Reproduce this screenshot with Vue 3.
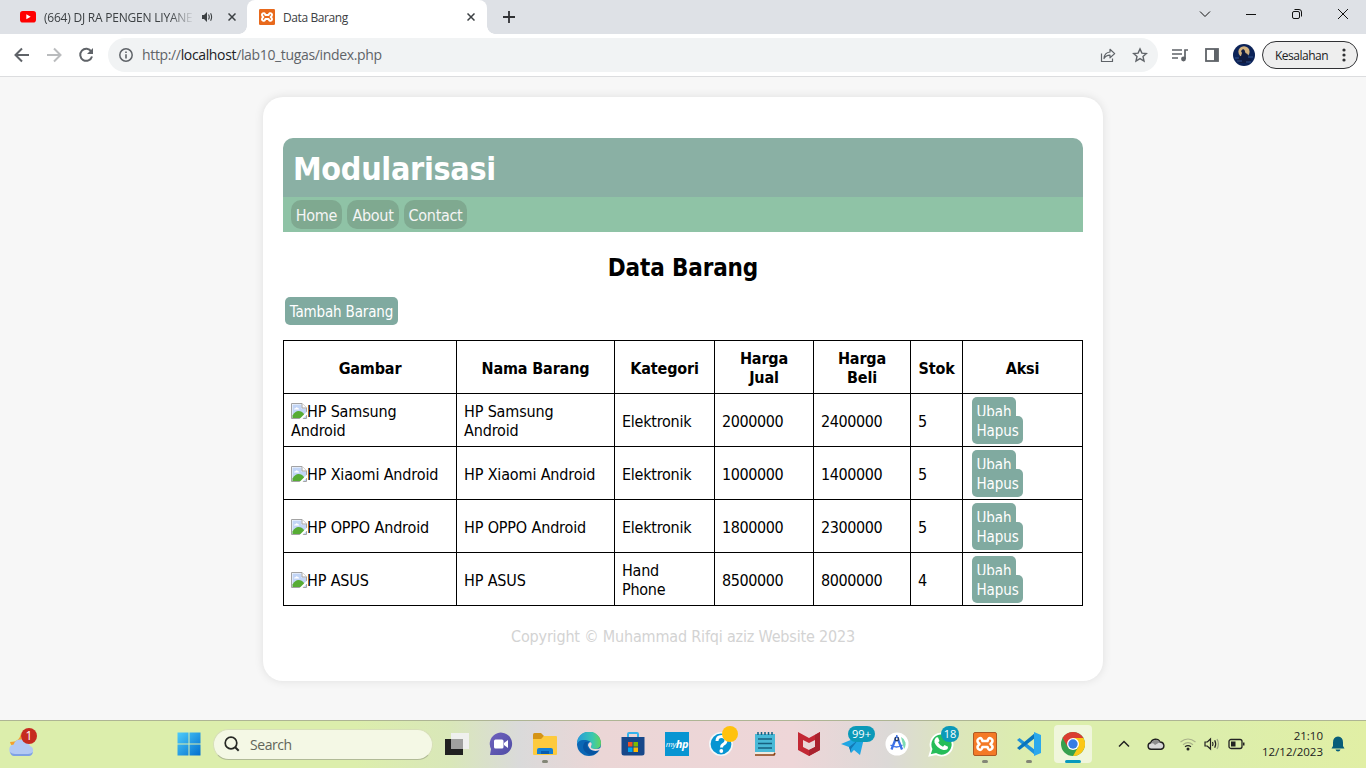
<script setup>
const rows = [
  { name: 'HP Samsung Android', kategori: 'Elektronik', jual: '2000000', beli: '2400000', stok: '5' },
  { name: 'HP Xiaomi Android', kategori: 'Elektronik', jual: '1000000', beli: '1400000', stok: '5' },
  { name: 'HP OPPO Android', kategori: 'Elektronik', jual: '1800000', beli: '2300000', stok: '5' },
  { name: 'HP ASUS', kategori: 'Hand Phone', jual: '8500000', beli: '8000000', stok: '4' }
]
const heads = ['Gambar', 'Nama Barang', 'Kategori', 'Harga Jual', 'Harga Beli', 'Stok', 'Aksi']
const xampp = 'M9.500 9H14.500L15 7.500Q16 5.500 18 6.500Q20.500 8 19 10.500L17.500 12L19 13.500Q20.500 16 18 17.500Q16 18.500 15 16.500L14.500 15H9.500L9 16.500Q8 18.500 6 17.500Q3.500 16 5 13.500L6.500 12L5 10.500Q3.500 8 6 6.500Q8 5.500 9 7.500Z'
</script>

<template>
  <div class="screen">
    <header class="tabs">
      <div class="tab first">
        <svg class="yt" width="16" height="12" viewBox="0 0 16 12"><rect width="16" height="11.5" rx="2.8" fill="#f00" /><path d="M6.3 3.3v5l4.4-2.5z" fill="#fff" /></svg>
        <span class="tab-title faded">(664) DJ RA PENGEN LIYANE</span>
        <svg class="sound" width="12" height="12" viewBox="0 0 12 12"><path d="M1 4h2l3-3v10L3 8H1z" fill="#3c4043" /><path d="M7.5 3.5q1.5 2.5 0 5M9.6 2.2q2 3.8 0 7.6" stroke="#3c4043" stroke-width="1.1" fill="none" /></svg>
        <svg class="close" width="8" height="8" viewBox="0 0 8 8"><path d="M.5.5l7 7M7.5.5l-7 7" stroke="#3c4043" stroke-width="1.5" /></svg>
      </div>
      <div class="tab active">
        <svg width="16" height="16" viewBox="0 0 24 24"><rect width="24" height="24" rx="2" fill="#e8691c" /><path :d="xampp" fill="none" stroke="#fff" stroke-width="2.800" stroke-linejoin="round" /></svg>
        <span class="tab-title second">Data Barang</span>
        <svg class="close" width="8" height="8" viewBox="0 0 8 8"><path d="M.5.5l7 7M7.5.5l-7 7" stroke="#3c4043" stroke-width="1.5" /></svg>
      </div>
      <svg class="plus" width="12" height="12" viewBox="0 0 12 12"><path d="M6 0v12M0 6h12" stroke="#303134" stroke-width="1.8" /></svg>
      <div class="win">
        <svg width="12" height="12" viewBox="0 0 12 12"><path d="M1 3.500l5 5 5-5" /></svg>
        <svg width="12" height="12" viewBox="0 0 12 12"><path d="M1 6.500h10" /></svg>
        <svg width="12" height="12" viewBox="0 0 12 12"><rect x="1.500" y="3.500" width="7" height="7" rx="1.500" /><path d="M3.500 1.500H8q2.500 0 2.500 2.500v4.500" /></svg>
        <svg width="12" height="12" viewBox="0 0 12 12"><path d="M1 1l10 10M11 1L1 11" /></svg>
      </div>
    </header>

    <div class="toolbar">
      <svg width="16" height="16" viewBox="0 0 16 16"><path d="M15 8H2M8 1.500L1.500 8 8 14.500" fill="none" stroke="#5f6368" stroke-width="2" /></svg>
      <svg width="16" height="16" viewBox="0 0 16 16"><path d="M1 8h13M8 1.500L14.500 8 8 14.500" fill="none" stroke="#babcbe" stroke-width="2" /></svg>
      <svg width="16" height="16" viewBox="0 0 16 16"><path d="M13.300 4.600A6 6 0 1 0 14 9.500" fill="none" stroke="#5f6368" stroke-width="2" /><path d="M15 1v6H9z" fill="#5f6368" /></svg>
      <div class="omnibox">
        <svg width="14" height="14" viewBox="0 0 14 14"><circle cx="7" cy="7" r="6.200" fill="none" stroke="#5f6368" stroke-width="1.500" /><path d="M7 6.200V10.500M7 3.500v1.600" stroke="#5f6368" stroke-width="1.600" /></svg>
        <span class="url">http://<b>localhost</b>/lab10_tugas/index.php</span>
        <svg class="share" width="16" height="16" viewBox="0 0 16 16"><path d="M1.500 6.500v8h11v-3M4 11.500C4.300 7.500 6.500 5.300 10 5V2.300L14.700 6.600 10 10.800V8.200C7.300 8.200 5.300 9.300 4 11.500z" fill="none" stroke="#5f6368" stroke-width="1.200" stroke-linejoin="round" /></svg>
        <svg width="16" height="16" viewBox="0 0 16 16"><path d="M8 1.900l1.900 4.200 4.500.4-3.400 3 1 4.500L8 11.600 4 14l1-4.500-3.400-3 4.500-.4z" fill="none" stroke="#5f6368" stroke-width="1.400" /></svg>
      </div>
      <svg class="queue" width="16" height="14" viewBox="0 0 16 14"><path d="M0 2h10M0 6h10M0 10h6" stroke="#5f6368" stroke-width="1.700" /><path d="M13 11V2h3" fill="none" stroke="#5f6368" stroke-width="1.700" /><circle cx="11.500" cy="11" r="2.400" fill="#5f6368" /></svg>
      <svg class="panel" width="14" height="14" viewBox="0 0 14 14"><rect x="1" y="1" width="12" height="12" fill="#fff" stroke="#5f6368" stroke-width="1.800" /><path d="M9 1h4v12H9z" fill="#5f6368" /></svg>
      <svg class="avatar" width="22" height="22" viewBox="0 0 22 22"><circle cx="11" cy="11" r="11" fill="#0c2358" /><circle cx="11" cy="7.800" r="5.600" fill="#d3b27f" /><path d="M5 14l3-2 1-3-1-2 2-2 1.500 1 1 3 2 1 1 3 3 3-4 3H7l-3-2z" fill="#101b40" /><path d="M2 14h4M15 13h5M4 17h5M13 18h5" stroke="#31538d" /></svg>
      <div class="error-chip"><span>Kesalahan</span><svg width="4" height="14" viewBox="0 0 4 14" fill="#303134"><circle cx="2" cy="2" r="1.600" /><circle cx="2" cy="7" r="1.600" /><circle cx="2" cy="12" r="1.600" /></svg></div>
    </div>

    <main class="page">
      <section class="card">
        <h1>Modularisasi</h1>
        <nav><a class="n1">Home</a><a class="n2">About</a><a class="n3">Contact</a></nav>
        <h2><span>Data Barang</span></h2>
        <a class="add">Tambah Barang</a>
        <table>
          <colgroup><col class="c1"><col class="c2"><col class="c3"><col class="c4"><col class="c5"><col class="c6"><col class="c7"></colgroup>
          <thead><tr><th v-for="h in heads" :key="h">{{ h }}</th></tr></thead>
          <tbody>
            <tr v-for="r in rows" :key="r.name">
              <td><svg class="broken" width="16" height="16" viewBox="0 0 16 16"><path d="M.5.5h10.500l4.500 4.500v10.500H.5z" fill="#fff" stroke="#a3a3a3" /><path d="M1.500 1.500h9v4H15V15H1.500z" fill="#c2d5f6" /><path d="M3 6.500q.2-1.500 1.500-1.300Q5.500 3.500 7 5.200q1.300 0 1.300 1.300z" fill="#fff" /><path d="M1.500 15v-2.500q2.500-4.500 6-4.500 3.500 0 5.500 3v4z" fill="#57ac34" /><path d="M11 .5V5h4.500" fill="#fff" stroke="#a3a3a3" /><path d="M16 8.500L8.500 16h3L16 11.500z" fill="#fff" /></svg>{{ r.name }}</td>
              <td>{{ r.name }}</td><td>{{ r.kategori }}</td><td>{{ r.jual }}</td><td>{{ r.beli }}</td><td>{{ r.stok }}</td>
              <td class="actions"><a>Ubah</a><a>Hapus</a></td>
            </tr>
          </tbody>
        </table>
        <footer><span>Copyright © Muhammad Rifqi aziz Website 2023</span></footer>
      </section>
    </main>

    <div class="taskbar">
      <div class="weather">
        <svg width="28" height="30" viewBox="0 0 28 30"><path d="M13 4c-1 6-4 9-11 9 1 5 7 8 12 5z" fill="#f5a12c" /><path d="M6 26a5.300 5.300 0 0 1-.3-10.500A7 7 0 0 1 18.500 14Q21 14 22 17a4.700 4.700 0 0 1-.5 9z" fill="#b2c9f4" /><path d="M2 23q2 2 5 2h13q3 0 5-2-1 4-4 4H6q-3 0-4-4z" fill="#7ea1e5" /></svg>
        <i class="badge red">1</i>
      </div>
      <div class="start"><svg width="24" height="24" viewBox="0 0 24 24"><defs><linearGradient id="wg" x1="0" y1="0" x2="24" y2="24" gradientUnits="userSpaceOnUse"><stop stop-color="#50cefb" /><stop offset="1" stop-color="#006dcd" /></linearGradient></defs><path d="M.5.5h11v11H.5zM12.500.5h11v11h-11zM.5 12.500h11v11H.5zM12.500 12.500h11v11h-11z" fill="url(#wg)" /></svg></div>
      <div class="search"><svg width="16" height="16" viewBox="0 0 16 16"><circle cx="7" cy="7" r="5.800" fill="none" stroke="#262824" stroke-width="1.700" /><path d="M11.200 11.200l3.500 3.500" stroke="#262824" stroke-width="2" /></svg><span>Search</span></div>
      <div class="apps">
        <div class="app"><svg width="24" height="24" viewBox="0 0 24 24"><path d="M0 7h18v16H0z" fill="#202020" /><path d="M6 1h18v16H6z" fill="#f0f0f0" opacity=".95" /><path d="M6 7h12v10H6z" fill="#a0a09f" /></svg></div>
        <div class="app"><svg width="24" height="24" viewBox="0 0 24 24"><defs><linearGradient id="tg" x2="1" y2="1"><stop stop-color="#6f62bd" /><stop offset="1" stop-color="#4f4ca5" /></linearGradient></defs><path d="M1 23l1-6A11.200 11.200 0 1 1 12 23z" fill="url(#tg)" /><rect x="5" y="7.500" width="9.500" height="9" rx="1.500" fill="#fff" /><path d="M15 11l4-3v8l-4-3z" fill="#fff" /></svg></div>
        <div class="app"><svg width="26" height="24" viewBox="0 0 26 24"><path d="M1 2.500Q1 1 2.500 1H9l3 3-2 4H1z" fill="#d59416" /><path d="M1 7h8l3-3h12q1 0 1 1v17q0 1-1 1H2q-1 0-1-1z" fill="#fdca3d" /><path d="M5 22v-4q0-2 2-2h12q2 0 2 2v4z" fill="#1380d5" /><path d="M9 19h8v3H9z" fill="#075caf" /></svg><i class="line" /></div>
        <div class="app"><svg width="24" height="24" viewBox="0 0 24 24"><defs><linearGradient id="eg"><stop stop-color="#279bdc" /><stop offset=".65" stop-color="#3ac7b0" /><stop offset="1" stop-color="#62d55e" /></linearGradient></defs><circle cx="12" cy="12" r="12" fill="#0b67b5" /><path d="M0 12A12 12 0 0 1 24 11Q24 17 17 17c-3 0-4-1-3-2.500C17 10 11 7.500 6 8Q2 8 0 12z" fill="url(#eg)" /><path d="M8 10q-5 7 3 12 6 3 11-4-7 3-11-2-2-3 0-6z" fill="#0754a1" /><path d="M14 14.500q2-3.500-1-4.500-3 2-1.500 4.500 1.500 4 7 4.500 3 0 6-2v-1.500q-3 2-7.500 1.500-4-.5-3-2.500z" fill="#ecdada" /></svg></div>
        <div class="app"><svg width="24" height="24" viewBox="0 0 24 24"><path d="M7 7V2q0-1 1-1h8q1 0 1 1v5" fill="none" stroke="#35b3ed" stroke-width="2" /><path d="M.5 5h23v16q0 2.500-2.500 2.500H3q-2.500 0-2.500-2.500z" fill="#17488a" /><path d="M7 10h4.500v4.500H7z" fill="#f25022" /><path d="M12.500 10H17v4.500h-4.500z" fill="#7fba00" /><path d="M7 15.500h4.500V20H7z" fill="#00a4ef" /><path d="M12.500 15.500H17V20h-4.500z" fill="#ffb900" /></svg></div>
        <div class="app"><div class="hp"><span>my</span><b>hp</b></div></div>
        <div class="app"><svg width="24" height="24" viewBox="0 0 24 24"><circle cx="12" cy="12" r="11.200" fill="#0795d2" stroke="#f4f7f8" stroke-width="1.600" /><path d="M8 9q0-4.500 4.500-4.500T17 8.500q0 2.500-3 4-1.500 1-1.500 3" fill="none" stroke="#fff" stroke-width="3" /><circle cx="12.300" cy="19" r="1.900" fill="#fff" /></svg><i class="dot" /></div>
        <div class="app"><svg width="24" height="26" viewBox="0 0 24 26"><path d="M2 3h20v19H2z" fill="#49b9d7" /><path d="M2 21h20l-2 3H2z" fill="#efe9df" /><path d="M2 24h19l1-2" stroke="#8c4215" stroke-width="1.700" fill="none" /><path d="M5 1v3M8.500 1v3M12 1v3M15.500 1v3M19 1v3M5 8h14M5 12.500h14M5 17h14" stroke="#176080" stroke-width="1.500" /></svg></div>
        <div class="app"><svg width="24" height="24" viewBox="0 0 24 24"><path d="M1 0l11 6 11-6v18l-11 6-11-6zM6 8v7l6 3 6-3V8l-6 3z" fill="#c32835" fill-rule="evenodd" /><path d="M18 3l5-3v18l-11 6v-6l6-3z" fill="#a9222e" /></svg></div>
        <div class="app"><svg width="28" height="26" viewBox="0 0 28 26"><path d="M2 13L26 3l-5 21-6-5-3 3-2-6z" fill="#20a6e3" /><path d="M10 16l9-7-7 9v4z" fill="#1278b4" /></svg><i class="badge cyan wide">99+</i></div>
        <div class="app"><svg width="24" height="24" viewBox="0 0 24 24"><circle cx="12" cy="12" r="11.500" fill="#fff" /><path d="M16 5a8 8 0 0 1 3 12z" fill="#7bdbb1" /><path d="M11 6L6.500 17.500M12.500 6L17 17.500" stroke="#3c72e8" stroke-width="2.300" /><circle cx="11.800" cy="7" r="1.700" fill="#fff" stroke="#263b63" stroke-width="1.500" /><path d="M5.500 13q6 4 12 0M11.800 3v3" stroke="#3c72e8" stroke-width="1.500" fill="none" /></svg></div>
        <div class="app"><svg width="26" height="26" viewBox="0 0 26 26"><path d="M1.500 24.500l2-6.500A11 11 0 1 1 8 23z" fill="#25bd59" stroke="#fff" stroke-width="1.800" /><path d="M8 6.500l2-.2 1.500 3.700-1.300 1.500q1.700 3 4.800 4.300l1.500-1.700 3.500 1.700q.2 3.700-4.500 3.200-6.500-1.500-9-7.500-.5-3 1.500-5z" fill="#fff" /></svg><i class="badge cyan wa">18</i></div>
        <div class="app"><svg width="24" height="24" viewBox="0 0 24 24"><rect x=".5" y=".5" width="23" height="23" rx="1.500" fill="#f47a27" stroke="#ad5925" /><path :d="xampp" fill="none" stroke="#fff" stroke-width="2.500" stroke-linejoin="round" /></svg><i class="line" /></div>
        <div class="app"><svg width="24" height="24" viewBox="0 0 24 24"><path d="M0 8l2.500-2L18 18v5z" fill="#2093dc" /><path d="M0 16l2.500 2L18 6V1z" fill="#0875bd" /><path d="M17 0l7 3v18l-7 3z" fill="#2ba9ed" /></svg><i class="line" /></div>
        <div class="app current"><svg width="24" height="24" viewBox="0 0 24 24"><circle cx="12" cy="12" r="12" fill="#37a04e" /><path d="M1.600 6A12 12 0 0 1 22.400 6H12L6.800 15z" fill="#da3d31" /><path d="M22.400 6A12 12 0 0 1 12 24L17.200 15 12 6z" fill="#fbc716" /><circle cx="12" cy="12" r="6" fill="#fff" /><circle cx="12" cy="12" r="4.700" fill="#377de4" /></svg><i class="line on" /></div>
      </div>
      <div class="tray">
        <svg class="up" width="12" height="8" viewBox="0 0 12 8"><path d="M1 6.500l5-5 5 5" fill="none" stroke="#222" stroke-width="1.500" /></svg>
        <svg class="cloud" width="18" height="14" viewBox="0 0 18 14"><path d="M4 12.300a3.300 3.300 0 0 1-.3-6.500A5 5 0 0 1 13 5a3.700 3.700 0 0 1 1 7.300z" fill="#d8d8d8" stroke="#1e1e1e" stroke-width="1.400" /><path d="M4 6q3 0 4 2l5-3q-4-5-9 1" fill="#8c8c8c" /></svg>
        <svg class="wifi" width="18" height="14" viewBox="0 0 18 14" fill="none"><path d="M1.500 5q7.500-6 15 0M4 7.700q5-4 10 0" stroke="#a9b28a" stroke-width="1.200" /><path d="M6 9.800q3-2.200 6 0" stroke="#222" stroke-width="1.200" /><circle cx="9" cy="12" r="1.500" fill="#222" /></svg>
        <svg class="volume" width="16" height="14" viewBox="0 0 16 14" fill="none" stroke="#222" stroke-width="1.200"><path d="M1 5h2.300L6.500 2v10L3.300 9H1zM8.500 5q1 2 0 4M10.700 3.300q2 3.700 0 7.400" /><path d="M13 2q2.800 5 0 10" stroke="#9ba582" /></svg>
        <svg class="battery" width="17" height="12" viewBox="0 0 17 12"><rect x="1" y="1.500" width="13" height="9" rx="2" fill="none" stroke="#222" stroke-width="1.300" /><path d="M3 3.500h4.500v5H3zM15 4.500h1.500v3H15z" fill="#222" /></svg>
        <div class="clock"><span class="time">21:10</span><span class="date">12/12/2023</span></div>
        <svg class="bell" width="14" height="16" viewBox="0 0 14 16"><path d="M7 .5q5 .5 5 6v3.500l1.500 2.500H.5L2 10V6.500Q2 1 7 .5zM4.500 13.500h5Q9 15.500 7 15.500t-2.500-2" fill="#075d79" /></svg>
      </div>
    </div>
  </div>
</template>

<style>
body { margin: 0; overflow: hidden; }
</style>

<style scoped>
* { box-sizing: border-box; }
.screen { width: 1366px; height: 768px; display: flex; flex-direction: column; background: #f7f7f7; font-family: "Open Sans", "Noto Sans", sans-serif; overflow: hidden; }
svg { display: block; flex: none; }
.tabs { height: 34px; background: #dee1e6; display: flex; align-items: center; flex: none; }
.tab { display: flex; align-items: center; height: 34px; white-space: nowrap; }
.first { width: 247px; padding-left: 20px; }
.active { position: relative; width: 240px; background: #fff; border-radius: 8px 8px 0 0; padding: 0 12px; }
.active::before, .active::after { content: ""; position: absolute; bottom: 0; width: 8px; height: 8px; }
.active::before { left: -8px; background: radial-gradient(circle at 0 0, transparent 7.5px, #fff 8px); }
.active::after { right: -8px; background: radial-gradient(circle at 100% 0, transparent 7.5px, #fff 8px); }
.tab-title { font-size: 12px; color: #3c4043; line-height: 17px; }
.faded { width: 150px; margin-left: 8px; overflow: hidden; letter-spacing: -.22px; -webkit-mask-image: linear-gradient(90deg, #000 84%, transparent); mask-image: linear-gradient(90deg, #000 84%, transparent); }
.sound { margin-left: 7px; }
.first .close { margin-left: 15px; }
.second { margin-left: 8px; letter-spacing: -.4px; }
.active .close { margin-left: auto; }
.plus { margin-left: 16px; }
.win { margin-left: auto; display: flex; gap: 34px; padding: 0 17px 6px 0; }
.win svg { fill: none; stroke: #111; stroke-width: 1; }
.toolbar { height: 43px; background: #fff; border-bottom: 1px solid #dcdddf; display: flex; align-items: center; padding-left: 14px; gap: 16px; flex: none; }
.omnibox { width: 1050px; height: 34px; border-radius: 17px; background: #f1f3f4; display: flex; align-items: center; padding: 0 10px 0 11px; margin-left: -2px; }
.url { margin-left: 9px; font-size: 14px; line-height: 20px; color: #5f6368; letter-spacing: -.35px; }
.url b { font-weight: 400; color: #202124; }
.share { margin-left: auto; margin-right: 16px; }
.queue { margin-left: -2px; }
.panel { margin-left: 1px; }
.avatar { margin-left: -2px; }
.error-chip { width: 96px; height: 28px; margin-left: -9px; border: 1px solid #303134; border-radius: 14px; background: #eee; display: flex; align-items: center; justify-content: space-between; padding: 0 11px 0 12px; font-size: 12px; color: #202124; letter-spacing: -.5px; }

.page { height: 643px; flex: none; padding-top: 20px; display: flex; justify-content: center; align-items: flex-start; font-family: "DejaVu Sans Condensed", "DejaVu Sans", sans-serif; font-stretch: condensed; font-size: 16px; line-height: 19px; color: #000; }
.card { width: 840px; height: 584px; padding: 41px 20px 0; border-radius: 20px; background: #fff; box-shadow: 0 0 10px rgba(0, 0, 0, .1); }
h1 { margin: 0; height: 59px; padding: 11px 10px 0; border-radius: 10px 10px 0 0; background: #8ab0a4; color: #fff; font-size: 32px; line-height: 40px; letter-spacing: -.3px; }
nav { height: 35px; background: #8fc3a6; display: flex; align-items: center; gap: 5px; padding-left: 8px; }
nav a { height: 29px; line-height: 31px; border-radius: 10px; background: #7fa990; color: #f5f5f5; text-align: center; letter-spacing: -.3px; }
.n1 { width: 51px; } .n2 { width: 52px; } .n3 { width: 63px; }
h2 { margin: 20px 0 15px; height: 30px; text-align: center; font-size: 24px; line-height: 32px; letter-spacing: -.15px; }
.add { display: block; width: 113px; height: 28px; margin-left: 2px; border-radius: 5px; background: #80aaa0; color: #fff; font-size: 15px; line-height: 30px; text-align: center; letter-spacing: -.15px; }
table { width: 800px; margin-top: 15px; table-layout: fixed; border-collapse: collapse; }
.c1 { width: 173px; } .c2 { width: 158px; } .c3 { width: 100px; } .c4 { width: 99px; } .c5 { width: 97px; } .c6 { width: 52px; } .c7 { width: 120px; }
th, td { height: 53px; padding: 2px 7px 0; border: 1px solid #000; text-align: left; vertical-align: middle; letter-spacing: -.15px; }
th { text-align: center; padding: 2px 3px 0; letter-spacing: -.15px; }
th:nth-child(4), th:nth-child(5) { padding: 2px 20px 0; }
td:nth-child(2) { padding-right: 15px; }
td:nth-child(3) { padding-right: 12px; letter-spacing: -.25px; }
td:nth-child(n + 4) { letter-spacing: -.42px; }
td:first-child { padding-right: 16px; }
.broken { display: inline-block; vertical-align: -2px; }
tbody tr td.actions { padding: 2px 0 0 9px; vertical-align: top; letter-spacing: -.1px; }
.actions a { display: block; width: 44px; height: 28px; margin-top: 1px; border-radius: 5px; background: #80aaa0; color: #fff; font-size: 15px; line-height: 31px; padding-left: 4.5px; }
.actions a + a { position: relative; width: 51px; margin-top: -9px; }
footer { margin-top: 21px; text-align: center; color: #d3d3d3; letter-spacing: -.18px; }

.taskbar { height: 48px; flex: none; border-top: 1px solid #aeb594; display: flex; align-items: center; padding-bottom: 1px; background: linear-gradient(90deg, #dceeac 0, #dceeac 26%, #d9e7b9 33%, #dadada 38%, #ebd6d6 44%, #eed6d8 58%, #dcd9d7 65%, #dce6bb 70%, #dceeac 76%, #dceeac 88%, #e1efa5 100%); }
.weather { position: relative; width: 177px; padding-left: 8px; }
.badge { position: absolute; height: 16px; border-radius: 8px; color: #fff; font: normal 11px/16px "Open Sans", sans-serif; text-align: center; }
.red { left: 21px; top: -1px; width: 16px; background: #c62b20; font-size: 12px; }
.start { width: 36px; }
.search { width: 220px; height: 31px; border-radius: 16px; background: #f4f8e5; border: 1px solid #d7dfb8; border-bottom-color: #b1bb96; display: flex; align-items: center; padding-left: 10px; font-size: 14px; color: #62665a; }
.search span { margin-left: 10px; letter-spacing: -.45px; }
.apps { display: flex; margin-left: 5px; gap: 6px; margin-right: 22px; }
.app { position: relative; width: 38px; height: 38px; display: flex; align-items: center; justify-content: center; border-radius: 4px; }
.current { background: #f0f6dc; }
.line { position: absolute; bottom: 0; left: 16px; width: 6px; height: 3px; border-radius: 2px; background: #838677; }
.line.on { width: 16px; left: 11px; background: #0899bc; }
.hp { width: 24px; height: 24px; background: #0795d2; color: #fff; display: flex; align-items: center; justify-content: center; font-style: italic; font-size: 8px; line-height: 22px; letter-spacing: -.4px; }
.hp b { font-size: 11px; }
.dot { position: absolute; left: 20px; top: 1px; width: 16px; height: 16px; border-radius: 50%; background: #ffc20e; }
.cyan { background: #0b99b8; }
.wide { left: 14px; top: 1px; width: 27px; }
.wa { left: 19px; top: 1px; width: 18px; }
.tray { display: flex; align-items: center; flex: 1; color: #222; }
.up { margin-left: 4px; }
.cloud { margin-left: 17px; }
.wifi { margin-left: 14px; }
.volume { margin-left: 7px; }
.battery { margin-left: 8px; }
.clock { width: 78px; display: flex; flex-direction: column; align-items: flex-end; font-size: 11.500px; line-height: 16px; white-space: nowrap; }
.bell { margin-left: 8px; }
</style>
